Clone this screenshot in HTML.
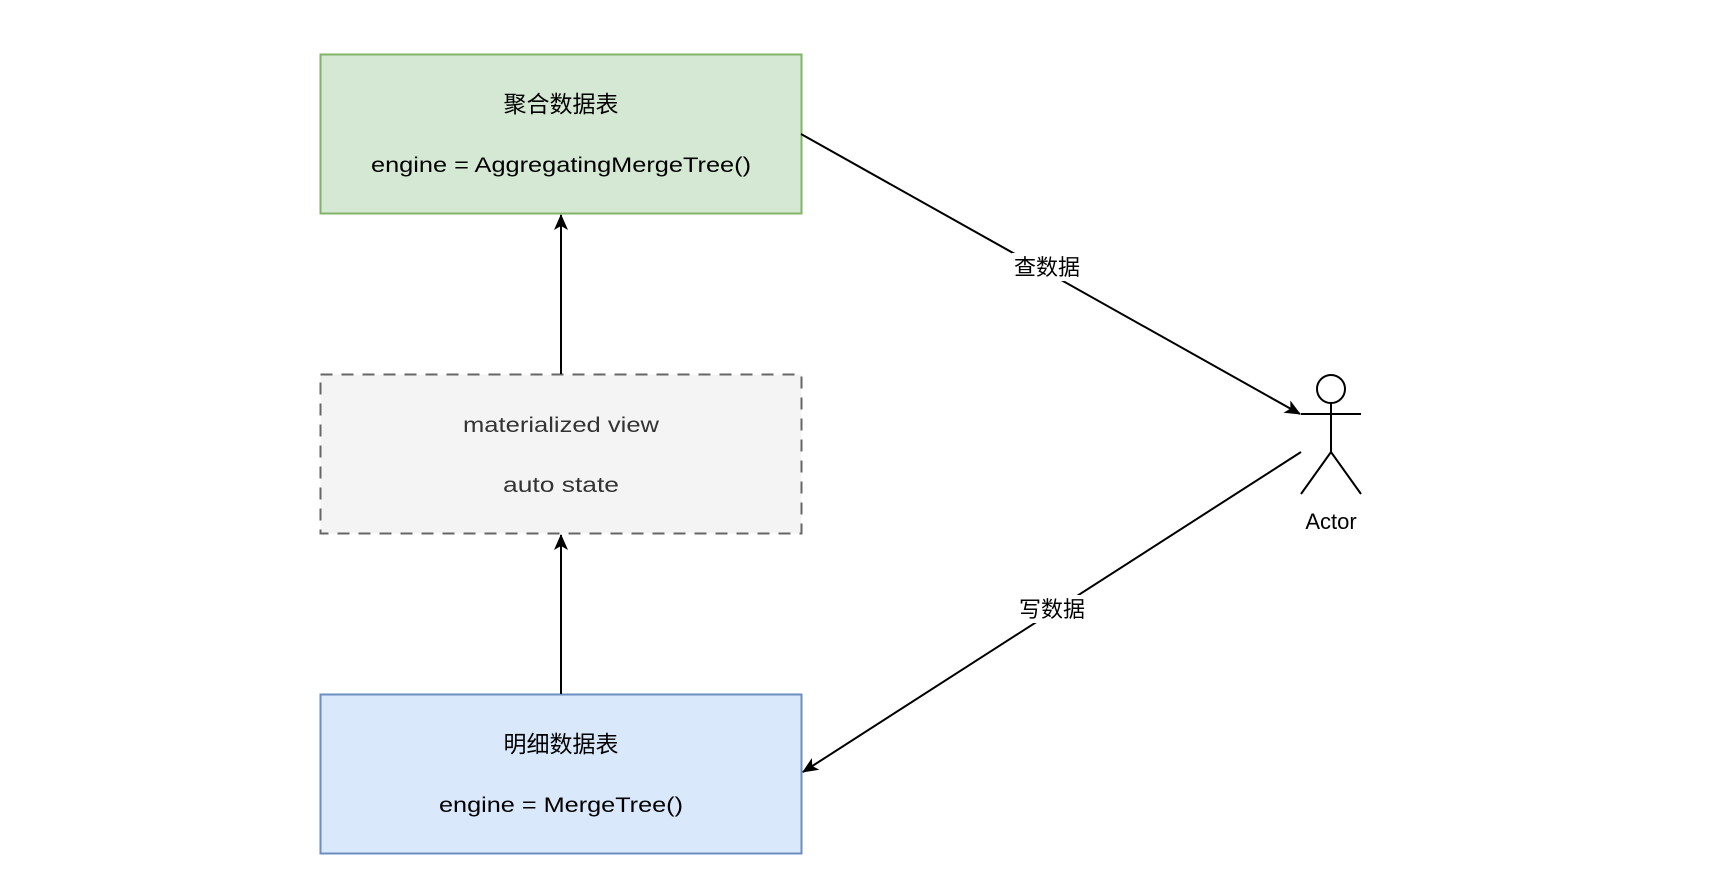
<!DOCTYPE html>
<html><head><meta charset="utf-8"><style>html,body{margin:0;padding:0;background:#fff}svg{display:block}</style></head>
<body>
<svg width="1714" height="886" viewBox="0 0 1714 886" xmlns="http://www.w3.org/2000/svg" font-family="'Liberation Sans','Noto Sans CJK SC',sans-serif" font-size="21">
<defs><marker id="a" viewBox="0 0 16 14" refX="15" refY="7" markerWidth="16" markerHeight="14" markerUnits="userSpaceOnUse" orient="auto"><path d="M0,0 L16,7 L0,14 L4,7 z" fill="#000"/></marker></defs>
<rect x="320.5" y="54.5" width="481" height="159" fill="#d5e8d4" stroke="#82b366" stroke-width="2"/>
<text x="561" y="112" text-anchor="middle" font-size="23">聚合数据表</text>
<text x="561" y="172" text-anchor="middle" textLength="380" lengthAdjust="spacingAndGlyphs">engine = AggregatingMergeTree()</text>
<rect x="320.5" y="374.5" width="481" height="159" fill="#f4f4f4" stroke="#666" stroke-width="2" stroke-dasharray="12 9"/>
<text x="561" y="432" text-anchor="middle" fill="#333" textLength="196" lengthAdjust="spacingAndGlyphs">materialized view</text>
<text x="561" y="492" text-anchor="middle" fill="#333" textLength="116" lengthAdjust="spacingAndGlyphs">auto state</text>
<rect x="320.5" y="694.5" width="481" height="159" fill="#dae8fc" stroke="#6c8ebf" stroke-width="2"/>
<text x="561" y="752" text-anchor="middle" font-size="23">明细数据表</text>
<text x="561" y="812" text-anchor="middle" textLength="244" lengthAdjust="spacingAndGlyphs">engine = MergeTree()</text>
<g stroke="#000" stroke-width="2" fill="none">
<line x1="561" y1="374" x2="561" y2="215" marker-end="url(#a)"/>
<line x1="561" y1="694" x2="561" y2="535" marker-end="url(#a)"/>
<line x1="801" y1="134" x2="1300" y2="414" marker-end="url(#a)"/>
<line x1="1301" y1="452" x2="803" y2="772" marker-end="url(#a)"/>
<circle cx="1331" cy="389" r="14" fill="#fff"/>
<line x1="1301" y1="414" x2="1361" y2="414"/>
<line x1="1331" y1="403" x2="1331" y2="452"/>
<path d="M1301,494 L1331,452 L1361,494"/>
</g>
<rect x="1012" y="253" width="70" height="28" fill="#fff"/>
<text x="1047" y="275" text-anchor="middle" font-size="22">查数据</text>
<rect x="1017" y="595" width="70" height="28" fill="#fff"/>
<text x="1052" y="617" text-anchor="middle" font-size="22">写数据</text>
<text x="1331" y="529" text-anchor="middle" font-size="22">Actor</text>
</svg>
</body></html>
